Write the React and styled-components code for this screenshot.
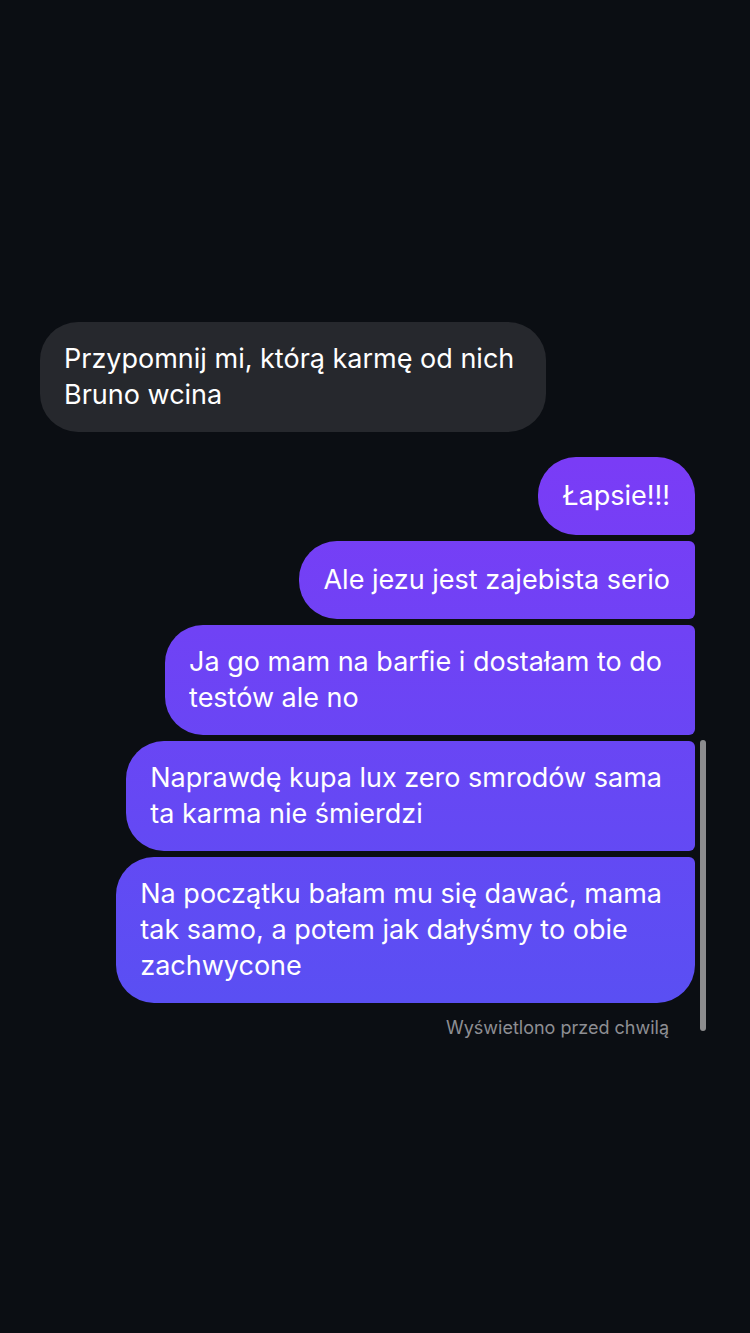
import React from 'react'
import styled, { createGlobalStyle, css } from 'styled-components'

const Global = createGlobalStyle`
  html, body {
    margin: 0;
    background: #0b0e13;
  }
  body {
    font-family: Inter, "Noto Sans", sans-serif;
    -webkit-font-smoothing: antialiased;
  }
`

const Screen = styled.div`
  position: relative;
  width: 750px;
  height: 1333px;
  overflow: hidden;
  background: #0b0e13;
`

const Thread = styled.div`
  display: flex;
  flex-direction: column;
  padding: 322px 55px 0 40px;
`

const Bubble = styled.div`
  width: fit-content;
  box-sizing: border-box;
  padding: 19px 25px 19px 24px;
  min-height: 78px;
  display: flex;
  align-items: center;
  font-size: 27px;
  line-height: 36px;
  color: #fff;
  border-radius: 38px;
  ${p => p.$wrap && css`
    padding-right: 33px;
  `}
`

const Received = styled(Bubble)`
  background: #26282d;
  padding-right: 32px;
  margin-bottom: 25px;
`

const Sent = styled(Bubble)`
  align-self: flex-end;
  margin-top: 6px;
  background: linear-gradient(180deg, #8a30f8 0px, #7a3cf6 460px, #5a4ff3 1000px, #4f55f2 1333px);
  background-attachment: fixed;
  ${p => p.$first && css`
    margin-top: 0;
    border-bottom-right-radius: 6px;
  `}
  ${p => p.$middle && css`
    border-top-right-radius: 6px;
    border-bottom-right-radius: 6px;
  `}
  ${p => p.$last && css`
    border-top-right-radius: 6px;
  `}
`

const Seen = styled.div`
  align-self: flex-end;
  margin: 14px 26px 0 0;
  font-size: 18px;
  color: #8e8e93;
`

const ScrollThumb = styled.div`
  position: absolute;
  left: 700px;
  top: 740px;
  width: 6px;
  height: 291px;
  border-radius: 3px;
  background: #8c8c8e;
`

const App = () => (
  <Screen>
    <Global />
    <Thread>
      <Received $wrap>
        Przypomnij mi, którą karmę od nich<br />Bruno wcina
      </Received>
      <Sent $first>Łapsie!!!</Sent>
      <Sent $middle>Ale jezu jest zajebista serio</Sent>
      <Sent $middle $wrap>
        Ja go mam na barfie i dostałam to do<br />testów ale no
      </Sent>
      <Sent $middle $wrap>
        Naprawdę kupa lux zero smrodów sama<br />ta karma nie śmierdzi
      </Sent>
      <Sent $last $wrap>
        Na początku bałam mu się dawać, mama<br />tak samo, a potem jak dałyśmy to obie<br />zachwycone
      </Sent>
      <Seen>Wyświetlono przed chwilą</Seen>
    </Thread>
    <ScrollThumb />
  </Screen>
)

export default App
